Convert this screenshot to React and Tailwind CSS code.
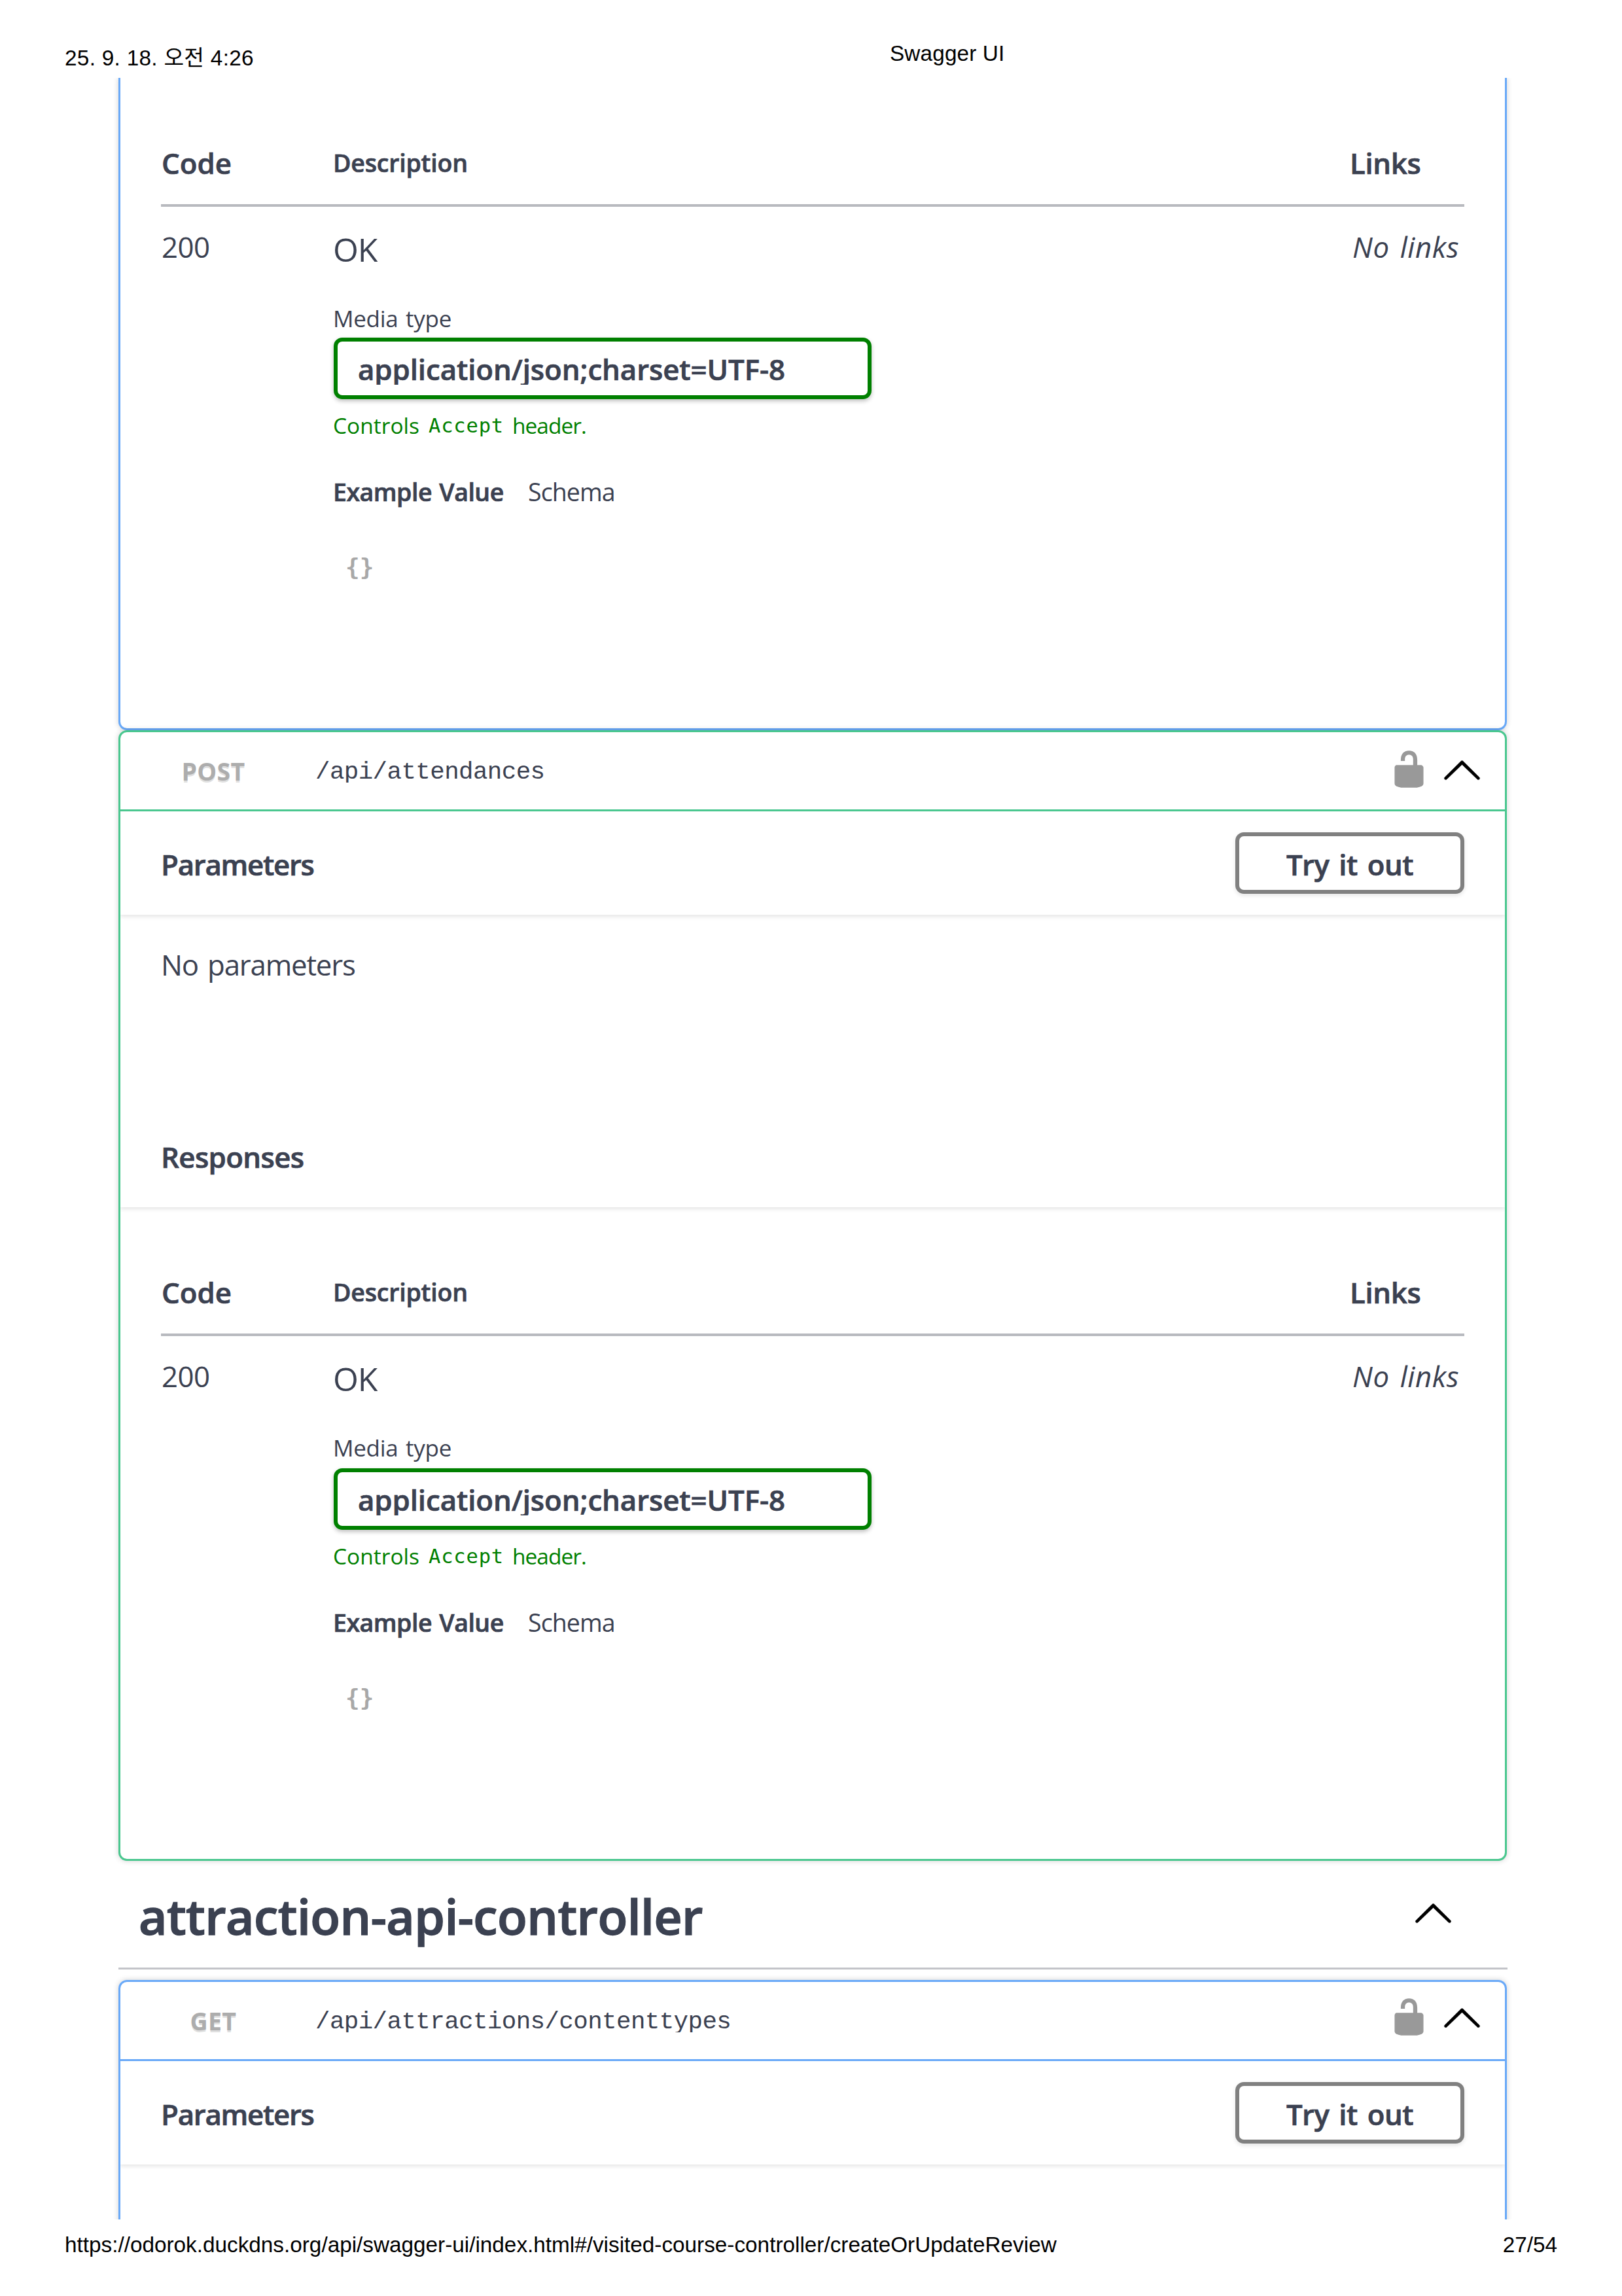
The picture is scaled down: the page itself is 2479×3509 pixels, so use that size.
import React from "react";

const LockIcon = () => (
  <svg viewBox="0 0 20 20" className="h-[63px] w-[63px] fill-[#999999]" aria-hidden="true">
    <path d="M15.8 8H14V5.6C14 2.703 12.665 1 10 1 7.334 1 6 2.703 6 5.6V6h2v-.801C8 3.754 8.797 3 10 3c1.203 0 2 .754 2 2.199V8H4c-.553 0-1 .646-1 1.199V17c0 .549.428 1.139.951 1.307l1.197.387C5.672 18.861 6.55 19 7.1 19h5.8c.549 0 1.428-.139 1.951-.307l1.196-.387c.524-.167.953-.757.953-1.306V9.199C17 8.646 16.352 8 15.8 8z" />
  </svg>
);

const ArrowUp = () => (
  <svg viewBox="0 0 20 20" className="h-[63px] w-[63px] fill-black stroke-black stroke-[0.15]" aria-hidden="true">
    <path d="M17.418 14.908c.272.268.709.268.979 0s.271-.701 0-.969l-7.908-7.83c-.27-.268-.707-.268-.979 0l-7.908 7.83c-.27.268-.27.701 0 .969.271.268.709.268.979 0L10 7.767l7.418 7.141z" />
  </svg>
);

const frames = {
  get: "border-[#69a9f8]",
  post: "border-[#4ac78f]",
};

function OperationBar({ kind, method, path, iconGap }) {
  return (
    <div className={`flex h-[121px] items-start border-b-[3px] ${frames[kind]}`}>
      <span className="mt-[35px] w-[284px] text-center text-[37.5px] leading-[50px] font-bold tracking-[0.3px] text-[#adadad] [text-shadow:0_3px_0_rgba(0,0,0,0.12)]">
        {method}
      </span>
      <span className="mt-[40px] ml-[14px] h-[37px] overflow-hidden pt-[6px] font-['Liberation_Mono',monospace] text-[37.5px] leading-[30px] tracking-[-0.6px]">
        {path}
      </span>
      <div className={`ml-auto flex gap-[18px] pr-[34px] ${iconGap}`}>
        <LockIcon />
        <ArrowUp />
      </div>
    </div>
  );
}

function SectionHeader({ title, tracking, button }) {
  return (
    <div className="flex h-[158px] items-center justify-between px-[62px] shadow-[0_3px_6px_rgba(0,0,0,0.1)] [clip-path:inset(0_0_-12px_0)]">
      <h4 className={`mt-1 text-[43.8px] leading-[50px] font-semibold [-webkit-text-stroke:0.7px] ${tracking}`}>{title}</h4>
      {button && (
        <button className="h-[94px] w-[350px] rounded-[13px] border-[6px] border-[#808080] pt-1 text-[43.8px] leading-[50px] font-semibold tracking-[-0.5px] [word-spacing:4px] shadow-[0_3px_6px_rgba(0,0,0,0.1)] [-webkit-text-stroke:0.7px]">
          {button}
        </button>
      )}
    </div>
  );
}

function Responses({ selectGap }) {
  return (
    <div className="px-[62px] pt-[105px]">
      <div className="grid h-[92px] grid-cols-[263px_1554px_1fr] items-start border-b-4 border-[#b8babf] leading-[50px] font-semibold [-webkit-text-stroke:0.7px]">
        <span className="pl-px text-[43.8px]">Code</span>
        <span className="text-[37.5px] tracking-[-0.2px]">Description</span>
        <span className="text-[43.8px] tracking-[-0.35px]">Links</span>
      </div>
      <div className="grid grid-cols-[263px_1554px_1fr] items-start">
        <span className="pt-9 pl-px text-[43.8px] leading-[50px] tracking-[-0.5px]">200</span>
        <div className="flex flex-col items-start pt-[35px]">
          <p className="text-[50px] leading-[60px] tracking-[-1.2px]">OK</p>
          <small className="mt-[51px] text-[35px] leading-[50px] tracking-[-0.3px] [word-spacing:3px]">Media type</small>
          <div className={`ml-px h-[94px] w-[822px] rounded-[13px] border-[6px] border-[#008000] pt-[22px] pl-[31px] shadow-[0_3px_6px_rgba(0,0,0,0.25)] ${selectGap}`}>
            <div className="overflow-hidden pb-[3px] text-[43.8px] leading-[41px] font-semibold tracking-[-0.08px] [-webkit-text-stroke:0.7px]">
              application/json;charset=UTF-8
            </div>
          </div>
          <div className="mt-[17px] flex text-[33.5px] leading-[46px] text-[#008000]">
            <span className="w-[146px]">Controls</span>
            <code className="w-[128px] font-['DejaVu_Sans_Mono',monospace] text-[30.5px] leading-[48px] tracking-[0.8px]">Accept</code>
            <span className="tracking-[-1px]">header.</span>
          </div>
          <div className="mt-[52px] flex text-[37.5px] leading-[50px]">
            <span className="w-[298px] font-semibold tracking-[-0.5px] [word-spacing:2px] [-webkit-text-stroke:0.7px]">Example Value</span>
            <span className="tracking-[-0.9px]">Schema</span>
          </div>
          <pre className="mt-[68px] ml-[19px] font-['DejaVu_Sans_Mono',monospace] text-[36px] leading-[44px] font-bold text-[#a8a8a8]">{"{}"}</pre>
        </div>
        <i className="pt-9 pl-[4px] text-[43.8px] leading-[50px] tracking-[0.6px] [word-spacing:4px]">No links</i>
      </div>
    </div>
  );
}

export default function App() {
  return (
    <div className="flex h-[3509px] w-[2479px] flex-col overflow-hidden bg-white font-['Open_Sans','Noto_Sans_CJK_KR',sans-serif] font-normal whitespace-nowrap text-[#3b4151]">
      <header className="flex h-[119px] items-start pl-[99px] font-['Liberation_Sans','Noto_Sans_CJK_KR',sans-serif] text-[33.3px] leading-[40px] text-black">
        <span className="mt-[69px] w-[1261px] tracking-[0.3px]">25. 9. 18. 오전 4:26</span>
        <span className="mt-[62px] tracking-[0.15px]">Swagger UI</span>
      </header>

      <main className="h-[3273px] overflow-hidden px-[181px]">
        <section className="h-[997px] w-[2122px] rounded-b-[13px] border-x-[3px] border-b-[3px] border-[#69a9f8] shadow-[0_0_9px_rgba(0,0,0,0.19)]">
          <Responses selectGap="mt-[4px]" />
        </section>

        <section className="h-[1728px] w-[2122px] rounded-[13px] border-[3px] border-[#4ac78f] bg-white shadow-[0_0_9px_rgba(0,0,0,0.19)]">
          <OperationBar kind="post" method="POST" path="/api/attendances" iconGap="pt-[25px]" />
          <SectionHeader title="Parameters" tracking="tracking-[-1.28px]" button="Try it out" />
          <p className="h-[289px] px-[62px] pt-[51px] text-[43.8px] leading-[50px] tracking-[-1.2px] [word-spacing:4px]">
            No parameters
          </p>
          <SectionHeader title="Responses" tracking="tracking-[-0.64px]" />
          <Responses selectGap="mt-[6px]" />
        </section>

        <div className="flex h-[166px] w-[2123px] items-start justify-between border-b-[3px] border-[#c3c4c9] pr-[82px] pl-[31px]">
          <h3 className="mt-[44px] text-[75px] leading-[80px] font-semibold tracking-[-0.53px] [-webkit-text-stroke:1.4px]">attraction-api-controller</h3>
          <div className="mt-[47px]">
            <ArrowUp />
          </div>
        </div>

        <section className="mt-4 h-[400px] w-[2122px] rounded-t-[13px] border-x-[3px] border-t-[3px] border-[#69a9f8] shadow-[0_0_9px_rgba(0,0,0,0.19)]">
          <OperationBar kind="get" method="GET" path="/api/attractions/contenttypes" iconGap="pt-[22px]" />
          <SectionHeader title="Parameters" tracking="tracking-[-1.28px]" button="Try it out" />
        </section>
      </main>

      <footer className="flex justify-between px-[99px] pt-[19px] font-['Liberation_Sans','Noto_Sans_CJK_KR',sans-serif] text-[33.3px] leading-[40px] text-black">
        <span>https://odorok.duckdns.org/api/swagger-ui/index.html#/visited-course-controller/createOrUpdateReview</span>
        <span>27/54</span>
      </footer>
    </div>
  );
}
